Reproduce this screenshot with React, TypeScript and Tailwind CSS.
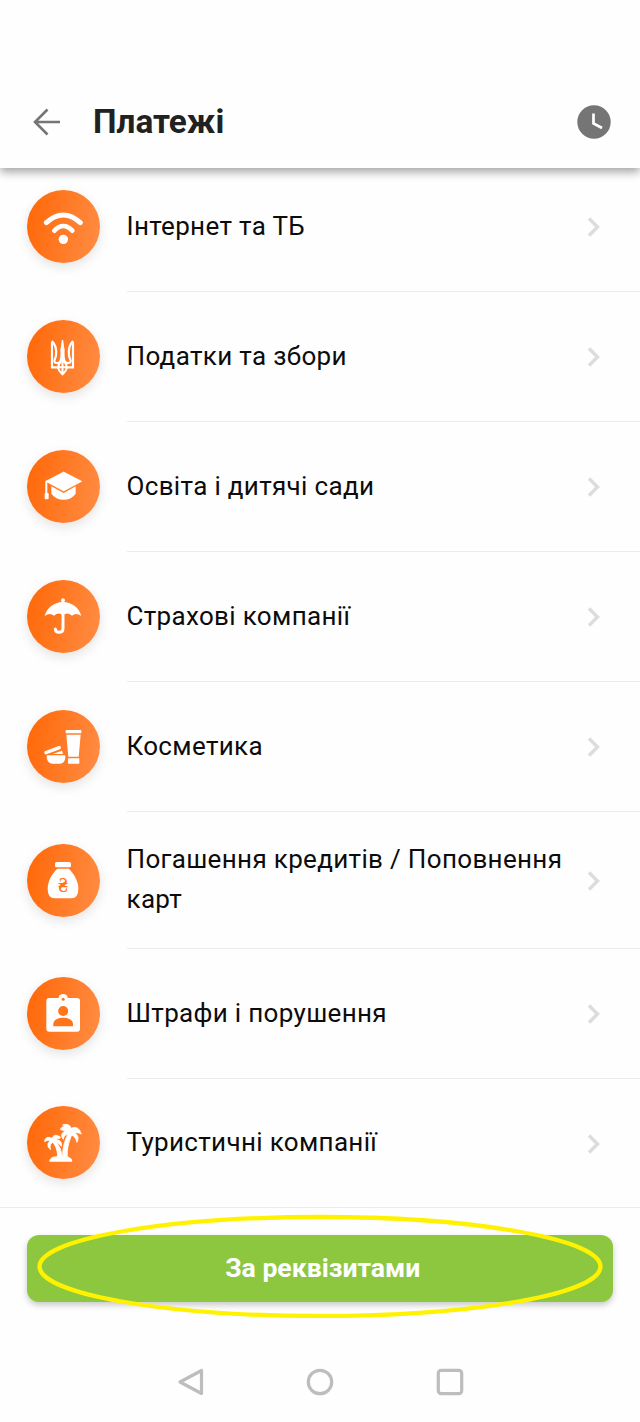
import type { ReactNode } from "react";

const WifiIcon = () => (
  <>
    <path d="M10 47Q61 1 112 47" fill="none" stroke="#fff" strokeWidth="15" strokeLinecap="round" />
    <path d="M34 71Q61 43 88 71" fill="none" stroke="#fff" strokeWidth="14" strokeLinecap="round" />
    <circle cx="61" cy="97" r="14" />
  </>
);

const TridentIcon = () => (
  <g fill="none" stroke="#fff" strokeWidth="6.500">
    <path d="M27 14V91H48" />
    <path d="M27 12C37 22 41 38 39 54C39 62 34 66 34 73C36 79 45 80 50 75C56 68 57 52 56 34" />
    <path d="M90 14V91H68" />
    <path d="M90 12C80 22 76 38 78 54C78 62 83 66 83 73C81 79 72 80 67 75C61 68 60 52 61 34" />
    <path d="M58.500 9L55 36V64H62V36Z" fill="#fff" strokeWidth="4" />
    <path d="M58.500 68C50 76 45 84 46 94C48 104 54 107 58.500 112C63 107 69 104 71 94C72 84 67 76 58.500 68V112M44 91H73" strokeWidth="6" />
  </g>
);

const CapIcon = () => (
  <>
    <path d="M8 43L62 15L116 43L62 72Z" strokeLinejoin="round" stroke="#fff" strokeWidth="2" />
    <path d="M25 58L62 78L98 58V80Q86 98 62 98Q38 98 25 80Z" />
    <path d="M10 43V82" stroke="#fff" strokeWidth="6" />
    <rect x="5" y="78" width="12" height="19" rx="3" />
  </>
);

const UmbrellaIcon = () => (
  <>
    <circle cx="60" cy="10" r="6" />
    <path d="M60 15C88 16 108 32 115 57Q99 45 87 56Q74 44 60 54Q46 44 33 56Q21 45 5 57C12 32 32 16 60 15Z" />
    <path d="M60 50V94Q60 106 48 106Q37 106 37 96" fill="none" stroke="#fff" strokeWidth="9" strokeLinecap="round" />
  </>
);

const CosmeticsIcon = () => (
  <>
    <rect x="68" y="9" width="47" height="10" rx="1" />
    <path d="M70 23H113L107 89H76Z" />
    <rect x="75" y="94" width="34" height="16" rx="2" />
    <path d="M9 77L49 62" stroke="#fff" strokeWidth="10" strokeLinecap="round" />
    <path d="M29 81L57 71L60 81Z" />
    <path d="M13 85H64Q68 85 67 91Q66 110 50 110H29Q13 110 11 91Q10 85 13 85Z" />
  </>
);

const MoneyBagIcon = () => (
  <>
    <rect x="36" y="6" width="48" height="16" rx="5" />
    <path d="M43 26H77C92 40 106 62 106 86Q106 115 85 115H35Q14 115 14 86C14 62 28 40 43 26Z" />
    <text x="46" y="96" className="fill-[#ff7519] font-[Roboto] text-[66px] font-bold" textLength="28" lengthAdjust="spacingAndGlyphs">
      ₴
    </text>
  </>
);

const BadgeIcon = () => (
  <>
    <rect x="10" y="12" width="101" height="101" rx="9" />
    <circle cx="60.500" cy="14" r="14" />
    <g className="fill-[#ff7519]">
      <circle cx="60.500" cy="16" r="4.500" />
      <circle cx="60.500" cy="51" r="15" />
      <path d="M31 97V90C31 76 47 71 60.500 71C74 71 90 76 90 90V97Z" />
    </g>
  </>
);

const PalmIcon = () => (
  <g stroke="#fff" strokeWidth="2.500" strokeLinejoin="round">
    <path d="M20 115C21 105 30 101 42 101Q58 97 75 102Q86 105 87 115Z" />
    <path d="M59 104C58 78 64 54 75 33L86 36C77 58 71 80 73 104Z" />
    <path d="M43 104C45 88 41 74 30 58L37 54C51 70 57 86 56 104Z" />
    <path d="M78 34C69 33 62 40 61 49C53 41 55 28 67 25C61 21 56 22 52 19C56 11 62 10 66 12C63 8 61 7 59 6C70 1 83 6 85 17C92 10 103 13 108 20C113 23 111 27 115 33C107 29 100 28 95 31C105 34 108 45 102 58C100 49 95 40 86 36Z" />
    <path d="M31 58C23 60 19 69 23 80C12 72 12 59 22 54C15 51 10 53 5 56C5 45 15 39 27 46C30 38 38 34 45 39C50 38 53 43 51 46C46 46 43 47 40 51C50 50 58 57 55 70C51 64 45 59 36 58Z" />
  </g>
);

type Item = { title: string; icon: ReactNode; height: string };

const items: Item[] = [
  { title: "Інтернет та ТБ", icon: <WifiIcon />, height: "h-[130px]" },
  { title: "Податки та збори", icon: <TridentIcon />, height: "h-[130px]" },
  { title: "Освіта і дитячі сади", icon: <CapIcon />, height: "h-[130px]" },
  { title: "Страхові компанії", icon: <UmbrellaIcon />, height: "h-[130px]" },
  { title: "Косметика", icon: <CosmeticsIcon />, height: "h-[130px]" },
  { title: "Погашення кредитів / Поповнення карт", icon: <MoneyBagIcon />, height: "h-[137px]" },
  { title: "Штрафи і порушення", icon: <BadgeIcon />, height: "h-[130px]" },
  { title: "Туристичні компанії", icon: <PalmIcon />, height: "h-[129px]" },
];

function PaymentRow({ title, icon, height, last }: Item & { last: boolean }) {
  return (
    <li className={`flex items-center pl-[26.5px] ${height} ${last ? "border-b border-[#ebebeb]" : ""}`}>
      <div className="mb-px flex size-[73px] shrink-0 items-center justify-center rounded-full bg-linear-[100deg,#ff6706,#ff8d45] shadow-[0_4px_12px_rgba(0,0,0,0.11)]">
        <svg viewBox="0 0 120 120" className="size-10 fill-white">
          {icon}
        </svg>
      </div>
      <div
        className={`ml-[27px] flex h-full flex-1 items-center justify-between pt-px pr-[39px] ${
          last ? "" : "border-b border-[#ebebeb]"
        }`}
      >
        <span className="w-[445px] pb-[3px] text-[26px] leading-10 tracking-[0.33px] text-[#0c0c0c]">{title}</span>
        <svg viewBox="0 0 14 20" className="h-5 w-3.5 shrink-0 fill-none stroke-[#dcdcdc] stroke-[3.400]">
          <path d="M2 1.500L10.500 10L2 18.500" />
        </svg>
      </div>
    </li>
  );
}

export default function App() {
  return (
    <div className="flex h-[1422px] w-[640px] flex-col overflow-hidden bg-[#fefefe] font-[Roboto,sans-serif]">
      <header className="relative z-10 flex h-[168px] shrink-0 items-center bg-[#fefefe] pt-[76px] pr-[29.5px] pl-[33px] shadow-[0_4px_9px_rgba(0,0,0,0.36)]">
        <svg viewBox="0 0 28 28" className="size-7 fill-none stroke-[#757575] stroke-[2.600]">
          <path d="M27 14H2M14.500 1.500L2 14L14.500 26.500" />
        </svg>
        <h1 className="ml-8 flex-1 text-[33.3px] leading-10 font-bold text-[#212121]">Платежі</h1>
        <svg viewBox="0 0 34 34" className="size-[34px]">
          <circle cx="17" cy="17" r="16.700" fill="#757575" />
          <path d="M16.500 8.500V18.500L25 23" fill="none" stroke="#fff" strokeWidth="2.700" />
        </svg>
      </header>

      <ul className="-mt-1.5 shrink-0">
        {items.map((item, idx) => (
          <PaymentRow key={item.title} {...item} last={idx === items.length - 1} />
        ))}
      </ul>

      {/* Action button with highlight ring */}
      <div className="relative mr-[27px] ml-[26.5px] mt-[27px] shrink-0">
        <button className="h-[67px] w-full rounded-xl bg-[#8dc73f] pb-0.5 pl-1.5 text-[26.6px] font-bold text-white shadow-[0_3px_6px_rgba(0,0,0,0.22)]">
          За реквізитами
        </button>
        <svg viewBox="0 0 566 104" className="pointer-events-none absolute -top-[21px] left-2.5 h-[104px] w-[566px]">
          <ellipse cx="283" cy="52.500" rx="280.500" ry="49.500" fill="none" stroke="#fff200" strokeWidth="4.300" />
        </svg>
      </div>

      {/* Android navigation bar */}
      <nav className="mt-[66px] flex items-center justify-between pr-44 pl-[176px]">
        <svg viewBox="0 0 28 28" className="size-7 fill-none stroke-[#bdbdbd] stroke-[3.200]">
          <path d="M25.500 2.500V25.500L4 14Z" strokeLinejoin="round" />
        </svg>
        <svg viewBox="0 0 28 28" className="size-7 fill-none stroke-[#bdbdbd] stroke-[3.200]">
          <circle cx="14" cy="14" r="11.700" />
        </svg>
        <svg viewBox="0 0 28 28" className="size-7 fill-none stroke-[#bdbdbd] stroke-[3.200]">
          <rect x="2.300" y="2.300" width="23.400" height="23.400" rx="3" />
        </svg>
      </nav>
    </div>
  );
}
